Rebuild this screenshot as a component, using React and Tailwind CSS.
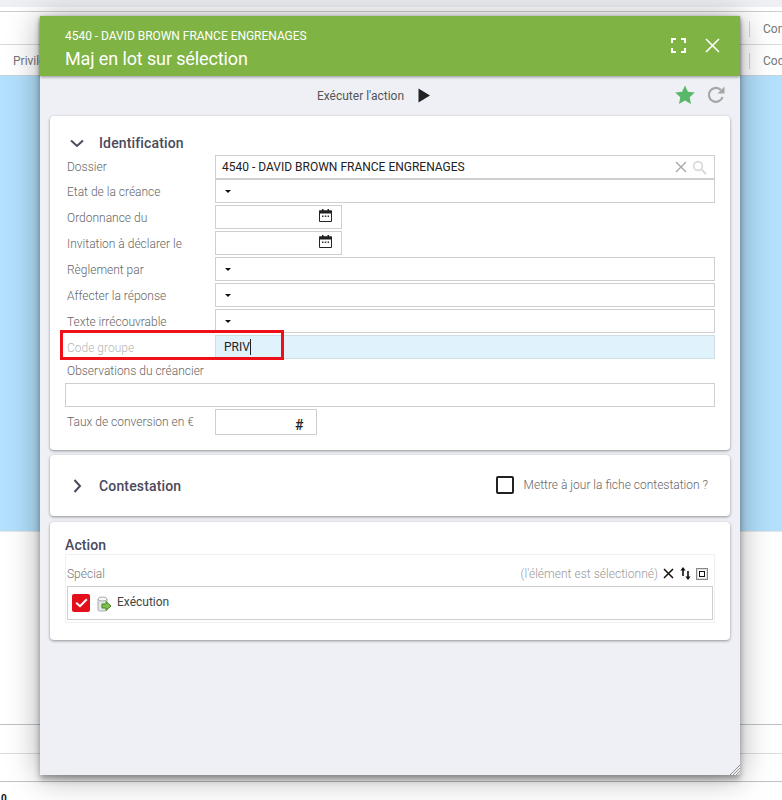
import React from "react";

function Caret() {
  return <span className="ml-[9px] w-0 h-0 border-x-[3px] border-x-transparent border-t-[3px] border-t-[#111]" />;
}

function CalendarIcon() {
  return (
    <svg width="13" height="13" viewBox="0 0 13 13" className="absolute left-[104px] top-[3px]">
      <path d="M0.5 2h12v10.5h-12z" fill="#fff" stroke="#222" />
      <rect x="0" y="1.5" width="13" height="3" fill="#222" />
      <rect x="3" y="0" width="1.5" height="3" fill="#222" />
      <rect x="8.5" y="0" width="1.5" height="3" fill="#222" />
      <rect x="3" y="6.5" width="1.5" height="1.5" fill="#333" />
      <rect x="5.8" y="6.5" width="1.5" height="1.5" fill="#333" />
      <rect x="8.6" y="6.5" width="1.5" height="1.5" fill="#333" />
    </svg>
  );
}

function Row({ label, labelClass = "text-[#666]", children, className = "" }) {
  return (
    <div className={"flex items-center h-[24px] " + className}>
      <div className={"w-[150px] pl-[2px] -mt-[1px] text-[12px] font-light shrink-0 " + labelClass}>{label}</div>
      {children}
    </div>
  );
}

function SelectRow({ label }) {
  return (
    <Row label={label}>
      <div className="flex-1 h-[24px] border border-[#cfcfcf] bg-white flex items-center -translate-y-[1px]">
        <Caret />
      </div>
    </Row>
  );
}

function DateRow({ label }) {
  return (
    <Row label={label}>
      <div className="w-[127px] h-[24px] border border-[#cfcfcf] bg-white -translate-y-[1px]" />
      <div className="relative w-0 h-[24px] -ml-[127px]"><CalendarIcon /></div>
    </Row>
  );
}

export default function App() {
  return (
    <div className="relative w-[782px] h-[800px] bg-white overflow-hidden text-[#444]" style={{ fontFamily: "Roboto, sans-serif" }}>
      {/* Background page */}
      <div className="h-[7px] bg-[#eff0f4]" />
      <div className="h-[4px] bg-white" />
      <div className="h-[34px] border-t border-[#cdcdcd] border-b border-b-[#d9d9d9] flex justify-end items-center pt-[2px] text-[12px] text-[#777]">
        <div className="w-[1px] h-[16px] bg-[#d5d5d5] mr-[13px]" />
        <span className="w-[19px] overflow-hidden whitespace-nowrap">Con</span>
      </div>
      <div className="h-[31px] border-b border-[#c9d3da] flex items-center justify-between pt-[2px] text-[12px] text-[#777]">
        <span className="pl-[13px]">Privilège</span>
        <div className="flex items-center">
          <div className="w-[1px] h-[16px] bg-[#d5d5d5] mr-[13px]" />
          <span className="w-[19px] overflow-hidden whitespace-nowrap">Cod</span>
        </div>
      </div>
      <div className="h-[455px] bg-[#b3e0fd]" />
      <div className="h-[193px] bg-white border-t border-[#e5e5e5]" />
      <div className="h-[29px] border-t border-[#bcc3c7]" />
      <div className="h-[29px] border-t border-[#dddddd] border-b border-b-[#bcc3c7]" />
      <div className="pl-[1px] pt-[11px] text-[10px] leading-[12px] font-bold text-[#111]">0</div>

      {/* Modal */}
      <div className="absolute left-[40px] top-[16px] w-[700px] h-[759px] bg-[#eff0f5] shadow-[0_4px_6px_rgba(0,0,0,0.35),0_2px_30px_rgba(0,0,0,0.35)] flex flex-col">
        <div className="h-[60px] bg-[#7fb344] shadow-[0_1px_3px_rgba(0,0,0,0.4)] flex items-start justify-between text-white shrink-0 z-10">
          <div className="pl-[25px] pt-[12px]">
            <div className="text-[12px] leading-[15px] tracking-[-0.03px] mt-[1px]">4540 - DAVID BROWN FRANCE ENGRENAGES</div>
            <div className="text-[18px] leading-[24px] mt-[3px] tracking-[-0.12px]">Maj en lot sur sélection</div>
          </div>
          <div className="flex items-center gap-[19px] pr-[20px] pt-[22px]">
            <svg width="15" height="15" viewBox="0 0 15 15" fill="none" stroke="#fff" strokeWidth="2">
              <path d="M1 5V1h4M10 1h4v4M14 10v4h-4M5 14H1v-4" />
            </svg>
            <svg width="15" height="15" viewBox="0 0 15 15" fill="none" stroke="#fff" strokeWidth="1.6">
              <path d="M1 1l13 13M14 1L1 14" />
            </svg>
          </div>
        </div>

        <div className="relative h-[40px] flex items-center justify-center shrink-0">
          <div className="flex items-center -ml-[33px] -mt-[1px]">
            <span className="text-[12px] text-[#555]">Exécuter l'action</span>
            <svg width="12" height="15" viewBox="0 0 12 15" className="ml-[14px]"><path d="M0.5 0.5l11.5 7-11.5 7z" fill="#222" /></svg>
          </div>
          <div className="absolute right-[15px] top-[9px] flex items-center gap-[12px]">
            <svg width="20" height="19" viewBox="0 0 24 23"><path d="M12 0.5l3.5 7.6 8.3 1-6.1 5.7 1.6 8.2L12 18.9l-7.3 4.1 1.6-8.2L0.2 9.1l8.3-1z" fill="#58b768" /></svg>
            <svg width="18" height="18" viewBox="0 0 18 18" fill="none" stroke="#a6a6a6" strokeWidth="2.2">
              <path d="M15.6 11A7 7 0 1 1 14 4" />
              <path d="M17.5 0.5v7h-7z" fill="#a6a6a6" stroke="none" />
            </svg>
          </div>
        </div>

        <div className="px-[10px] flex flex-col">
          {/* Identification */}
          <div className="h-[334px] bg-white rounded-[4px] shadow-[0_1px_3px_rgba(0,0,0,0.4)] px-[15px] pt-[18px]">
            <div className="flex items-center h-[18px] mb-[3px]">
              <svg width="14" height="9" viewBox="0 0 14 9" fill="none" stroke="#4b4b5c" strokeWidth="2" className="ml-[5px]">
                <path d="M1 1.5l6 5.5 6-5.5" />
              </svg>
              <span className="ml-[15px] text-[14px] font-medium tracking-[0.15px] text-[#4a4a5c]">Identification</span>
            </div>
            <div className="flex flex-col">
              <Row label="Dossier">
                <div className="flex-1 h-[24px] border border-[#cfcfcf] bg-white flex items-center justify-between pl-[6px] pr-[7px] text-[12px] text-[#222]">
                  <span>4540 - DAVID BROWN FRANCE ENGRENAGES</span>
                  <span className="flex items-center gap-[5px]">
                    <svg width="12" height="12" viewBox="0 0 12 12" fill="none" stroke="#a8a8a8" strokeWidth="1.4"><path d="M1 1l10 10M11 1L1 11" /></svg>
                    <svg width="15" height="15" viewBox="0 0 15 15" fill="none" stroke="#d8d8d8" strokeWidth="1.6"><circle cx="6" cy="6" r="4.4" /><path d="M9.4 9.4l4.6 4.6" strokeWidth="2" /></svg>
                  </span>
                </div>
              </Row>
              <div className="h-[1px]" />
              <SelectRow label="Etat de la créance" />
              <div className="h-[2px]" />
              <DateRow label="Ordonnance du" />
              <div className="h-[2px]" />
              <DateRow label="Invitation à déclarer le" />
              <div className="h-[2px]" />
              <SelectRow label="Règlement par" />
              <div className="h-[2px]" />
              <SelectRow label="Affecter la réponse" />
              <div className="h-[2px]" />
              <SelectRow label="Texte irrécouvrable" />
              <div className="h-[2px]" />
              <div className="relative">
                <Row label="Code groupe" labelClass="text-[#b5b5b5]">
                  <div className="flex-1 h-[24px] border border-[#cfdde5] bg-[#e0f3fd] flex items-center pl-[8px] -translate-y-[1px] text-[12px] text-[#222]">
                    <span>PRIV</span><span className="w-[1px] h-[16px] bg-[#222]" />
                  </div>
                </Row>
                <div className="absolute left-[-5px] top-[-6px] w-[224px] h-[30px] border-[3px] border-[#ee0f18]" />
              </div>
              <div className="text-[12px] font-light text-[#666] pl-[2px] mt-[3px] leading-[16px]">Observations du créancier</div>
              <div className="h-[24px] mt-[4px] border border-[#cfcfcf]" />
              <Row label="Taux de conversion en €" className="mt-[2px] !h-[26px]">
                <div className="relative w-[102px] h-[26px] border border-[#cfcfcf] bg-white">
                  <span className="absolute left-[79px] top-[7px] text-[14px] leading-[16px] font-medium text-[#222]">#</span>
                </div>
              </Row>
            </div>
          </div>

          {/* Contestation */}
          <div className="h-[61px] mt-[5px] pt-[1px] bg-white rounded-[4px] shadow-[0_1px_3px_rgba(0,0,0,0.4)] flex items-center justify-between pl-[23px] pr-[22px]">
            <div className="flex items-center">
              <svg width="9" height="14" viewBox="0 0 9 14" fill="none" stroke="#4b4b5c" strokeWidth="2"><path d="M1.5 1l5.5 6-5.5 6" /></svg>
              <span className="ml-[17px] text-[14px] font-medium tracking-[0.15px] text-[#4a4a5c]">Contestation</span>
            </div>
            <div className="flex items-center -mt-[3px]">
              <span className="w-[18px] h-[18px] border-2 border-[#222] rounded-[2px]" />
              <span className="ml-[10px] text-[12px] font-light text-[#666]">Mettre à jour la fiche contestation ?</span>
            </div>
          </div>

          {/* Action */}
          <div className="h-[118px] mt-[6px] bg-white rounded-[4px] shadow-[0_1px_3px_rgba(0,0,0,0.4)] px-[15px] pt-[14px]">
            <div className="text-[14px] leading-[18px] font-medium tracking-[0.1px] text-[#4a4a5c]">Action</div>
            <div className="border border-[#f0f0f0] h-[69px] px-[1px]">
              <div className="flex items-center justify-between h-[31px] pr-[5px] pt-[6px]">
                <span className="text-[12px] font-light text-[#777]">Spécial</span>
                <div className="flex items-center">
                  <span className="text-[12px] font-light tracking-[0.03px] text-[#999]">(l'élément est sélectionné)</span>
                  <svg width="11" height="11" viewBox="0 0 11 11" fill="none" stroke="#111" strokeWidth="1.5" className="ml-[5px]"><path d="M1 1l9 9M10 1L1 10" /></svg>
                  <svg width="11" height="13" viewBox="0 0 11 13" className="ml-[6px]">
                    <path d="M3 0l2.6 3.5H3.8V9H2.2V3.5H.4z" fill="#111" />
                    <path d="M8 13L5.4 9.5h1.8V4h1.6v5.5h1.8z" fill="#111" />
                  </svg>
                  <svg width="12" height="12" viewBox="0 0 12 12" fill="none" className="ml-[5px]">
                    <rect x="0.5" y="0.5" width="11" height="11" stroke="#111" strokeDasharray="1 1" />
                    <rect x="1.5" y="1.5" width="9" height="9" stroke="#bbb" strokeDasharray="1 1" />
                    <rect x="3.5" y="3.5" width="5" height="5" stroke="#111" />
                  </svg>
                </div>
              </div>
              <div className="h-[34px] border border-[#cfcfcf] flex items-center pl-[4px]">
                <span className="w-[18px] h-[18px] bg-[#e3101c] rounded-[2px] flex items-center justify-center">
                  <svg width="13" height="10" viewBox="0 0 13 10" fill="none" stroke="#fff" strokeWidth="2"><path d="M1.2 4.8l3.8 3.4 6.8-7" /></svg>
                </span>
                <svg width="15" height="17" viewBox="0 0 15 17" className="ml-[7px] mt-[2px]">
                  <path d="M1 3v11c0 1.5 8 1.5 9 0V3z" fill="#e4e6e6" stroke="#a8adad" />
                  <ellipse cx="5.5" cy="3" rx="4.5" ry="2" fill="#f6f7f7" stroke="#a8adad" />
                  <path d="M5 8h4V5.5l5 4.5-5 4.5V12H5z" fill="#86bd4e" stroke="#3f8a22" />
                </svg>
                <span className="ml-[5px] -mt-[3px] text-[12px] text-[#444]">Exécution</span>
              </div>
            </div>
          </div>
        </div>

        <svg width="10" height="10" viewBox="0 0 10 10" className="absolute right-0 bottom-0" stroke="#777" strokeWidth="0.8">
          <path d="M0 10L10 0M3 10l7-7M6 10l4-4M8.5 10l1.5-1.5" />
        </svg>
      </div>
    </div>
  );
}
